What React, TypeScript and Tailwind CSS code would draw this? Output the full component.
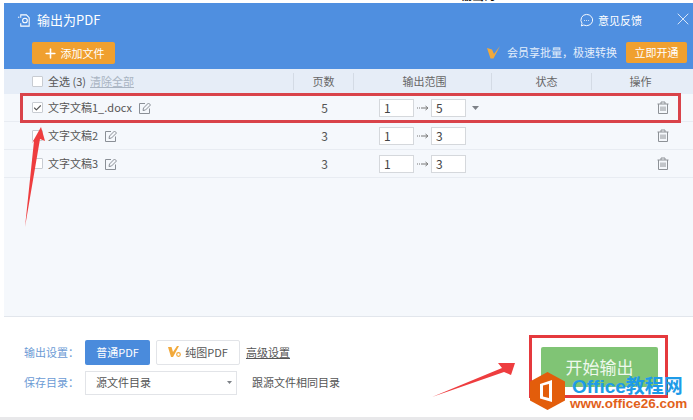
import { Check, Plus, X } from 'lucide-react'

const rows = [
  { name: '文字文稿1_.docx', pages: 5, checked: true },
  { name: '文字文稿2', pages: 3, checked: false },
  { name: '文字文稿3', pages: 3, checked: false },
]

function EditIcon() {
  return (
    <svg viewBox="0 0 12 12" fill="none" stroke="#8a8f96" strokeWidth="1" className="ml-[7px] size-3 shrink-0">
      <path d="M10.500 6.500v5h-10v-10h5.500" />
      <path d="M4 8.500l.5-2.500 5-5 2 2-5 5z" />
    </svg>
  )
}

function TrashIcon() {
  return (
    <svg viewBox="0 0 12 13" fill="none" stroke="#8d9196" strokeWidth="1" className="h-[13px] w-3">
      <path d="M.5 3h11M4 3v-2h4v2M1.500 3v9.500h9v-9.500M4 5.500v4.500M6 5.500v4.500M8 5.500v4.500" />
    </svg>
  )
}

function RangeBox({ value }: { value: number }) {
  return (
    <div className="flex h-[18px] w-[35px] items-center border border-[#d5d8dc] bg-white pl-1 text-xs text-[#444]">
      {value}
    </div>
  )
}

function RangeArrow() {
  return (
    <svg viewBox="0 0 17 8" fill="none" stroke="#777" strokeWidth="1" className="h-2 w-[17px]">
      <path d="M3 4h5" strokeDasharray="1 1" />
      <path d="M8 4h5" />
      <path d="M11.500 2l2.500 2-2.500 2" />
    </svg>
  )
}

function Caret({ className }: { className: string }) {
  return (
    <svg viewBox="0 0 7 4" className={className}>
      <polygon points="0,0 7,0 3.500,4" fill="#7d8187" />
    </svg>
  )
}

function VipMark({ className }: { className: string }) {
  return (
    <svg viewBox="0 0 13 13" className={className}>
      <polygon points="0,2 5,3.500 7,8 13,0 6.500,12.500 3.500,12.500" fill="#f2a93b" />
    </svg>
  )
}

function Arrow({ className, points, box }: { className: string; points: string; box: string }) {
  return (
    <svg viewBox={box} className={`absolute ${className}`}>
      <polygon points={points} fill="#ee3d3f" />
    </svg>
  )
}

export default function App() {
  return (
    <div className="relative flex h-[420px] w-[693px] flex-col overflow-hidden bg-white font-['Noto_Sans_CJK_SC','Liberation_Sans',sans-serif] text-[11px] text-[#555]">
      <div className="h-[3px] shrink-0 overflow-hidden bg-white pl-[460px]">
        <div className="-mt-[13px] text-[12px] font-bold leading-4 text-[#111]">输出为PDF</div>
      </div>

      <div className="ml-1 flex h-[66px] shrink-0 flex-col bg-[#4f8fe0] text-white">
        <div className="flex h-[39px] shrink-0 items-start justify-between pl-[13px] pt-[9px]">
          <div className="flex items-center gap-[5px] text-[13px] leading-4">
            <svg viewBox="0 0 16 16" fill="none" stroke="white" strokeWidth="1.100" className="size-[15px]">
              <path d="M4 5v-3h6l3 3v9h-9v-3" />
              <path d="M1 4.500h1.500" />
              <circle cx="8.500" cy="8" r="2.500" />
            </svg>
            输出为PDF
          </div>
          <div className="flex items-start">
            <svg viewBox="0 0 16 16" fill="none" stroke="white" strokeWidth="1" className="mr-1 mt-px size-[15px]">
              <path d="M8 1.500a6.500 6 0 1 1-3 11.300l-2.500 1 .7-2.800a6 6 0 0 1 4.800-9.500z" />
              <path d="M5.500 8h.8M7.700 8h.8M9.900 8h.8" />
            </svg>
            <span className="mr-[31px] text-[11px] leading-4">意见反馈</span>
            <X size={20} strokeWidth={1.200} className="-mt-[3px] text-[#d8e6f8]" />
          </div>
        </div>
        <div className="flex items-start justify-between pl-[28px] pr-[6px]">
          <button className="flex h-[22px] w-[83px] items-center justify-center gap-[3px] rounded-[2px] bg-[#f0a02f]">
            <Plus size={15} strokeWidth={2.500} />
            添加文件
          </button>
          <div className="flex h-[21px] items-center">
            <VipMark className="mr-[7px] size-[13px]" />
            <span className="mr-[9px] text-[#e4eefb]">会员享批量，极速转换</span>
            <button className="h-[21px] w-[61px] rounded-[2px] bg-[#f0a02f]">立即开通</button>
          </div>
        </div>
      </div>

      <div className="ml-1 flex min-h-0 flex-1 flex-col bg-[#f5f8fc]">
        <div className="flex h-[25px] shrink-0 items-center bg-[#e6edf7] text-[#666]">
          <div className="flex w-[290px] items-center border-r border-[#d4dbe5] pl-[28px]">
            <span className="mr-[5px] size-[11px] rounded-[1px] border border-[#c8ccd2] bg-white" />
            <span className="mr-1 text-[#555]">全选 (3)</span>
            <span className="text-[#a9b4c2] underline">清除全部</span>
          </div>
          <div className="w-[60px] border-r border-[#d4dbe5] text-center">页数</div>
          <div className="w-[138px] border-r border-[#d4dbe5] pl-1 text-center">输出范围</div>
          <div className="w-[100px] border-r border-[#d4dbe5] pl-2.5 text-center">状态</div>
          <div className="flex-1 pr-[4px] text-center">操作</div>
        </div>

        {rows.map((row) => (
          <div key={row.name} className="flex h-[28px] shrink-0 items-center border-b border-[#e8ecf2]">
            <div className="flex w-[290px] items-center pl-[28px]">
              <span className="mr-[5px] flex size-[11px] items-center justify-center rounded-[1px] border border-[#c8ccd2] bg-white">
                {row.checked && <Check size={10} strokeWidth={3} className="text-[#555]" />}
              </span>
              <span className="text-[#555]">{row.name}</span>
              <EditIcon />
            </div>
            <div className="w-[60px] pl-px text-center text-xs">{row.pages}</div>
            <div className="flex w-[138px] items-center pl-[25px]">
              <RangeBox value={1} />
              <RangeArrow />
              <RangeBox value={row.pages} />
              {row.checked && <Caret className="ml-[6px] h-1 w-[7px]" />}
            </div>
            <div className="w-[165px]" />
            <TrashIcon />
          </div>
        ))}
      </div>

      <div className="ml-1 flex h-[101px] shrink-0 items-center justify-between border-t border-[#e2e6ec] pl-5 pr-[35px]">
        <div className="flex flex-col gap-1.5">
          <div className="flex items-center">
            <span className="w-[61px] text-[#6c9bd5]">输出设置：</span>
            <button className="h-[25px] w-[65px] rounded-[2px] bg-[#4a8bdc] text-white">普通PDF</button>
            <button className="ml-[6px] flex h-[25px] w-[84px] items-center justify-center gap-1 rounded-[2px] border border-[#e2e4e8] bg-white">
              <svg viewBox="0 0 13 12" className="h-3 w-[13px]">
                <polygon points="0,1 3.500,1 5,6 9,0 11,0 5,11 3,11" fill="#f2a93b" />
                <circle cx="10.500" cy="8.500" r="1.800" fill="none" stroke="#f2a93b" strokeWidth="1.200" />
              </svg>
              纯图PDF
            </button>
            <span className="ml-[6px] underline">高级设置</span>
          </div>
          <div className="flex items-center">
            <span className="w-[61px] text-[#6c9bd5]">保存目录：</span>
            <div className="flex h-[24px] w-[152px] items-center justify-between border border-[#e2e4e8] bg-white pl-[10px] pr-1">
              源文件目录
              <Caret className="h-[3px] w-[5px]" />
            </div>
            <span className="ml-[15px]">跟源文件相同目录</span>
          </div>
        </div>
        <button className="flex h-[40px] w-[117px] items-center justify-center rounded-[2px] bg-[#80c475] pb-[2px] text-[17px] leading-none text-[#eef8ec]">
          开始输出
        </button>
      </div>

      <div className="h-[3px] shrink-0 bg-[#e8e8ea]" />

      <div className="absolute left-[20px] top-[93px] h-[30px] w-[661px] border-[3px] border-[#d9434a]" />
      <div className="absolute left-[529px] top-[335px] h-[63px] w-[139px] border-[3px] border-[#e5393d]" />

      <Arrow
        className="left-[24px] top-[124px] h-[105px] w-[22px]"
        box="0 0 22 105"
        points="17,3 21,17 16,15 1,103 10,17 8,19"
      />
      <Arrow
        className="left-[431px] top-[362px] h-[38px] w-[85px]"
        box="0 0 85 38"
        points="84,1 67,1 71,6 1,35 73,10 80,13"
      />

      <div className="absolute left-[530px] top-[372px]">
        <svg viewBox="0 0 35 38" className="h-[38px] w-[35px]">
          <polygon points="17.500,0 35,9.500 35,28.500 17.500,38 0,28.500 0,9.500" fill="#e35d0b" />
          <path d="M10 12l12-4v22l-12-3.500zM13 13.500v11l6 1.500v-14z" fill="white" fillRule="evenodd" />
        </svg>
      </div>
      <div className="absolute left-[572px] top-[376px] font-['Liberation_Sans','Noto_Sans_CJK_SC',sans-serif] text-[19px] font-bold leading-[21px] text-[#1e9be8]">
        Office教程网
      </div>
      <div className="absolute left-[570px] top-[397px] font-['Liberation_Sans',sans-serif] text-[13.500px] font-bold leading-[13px] text-[#e2611a]">
        www.office26.com
      </div>
    </div>
  )
}
